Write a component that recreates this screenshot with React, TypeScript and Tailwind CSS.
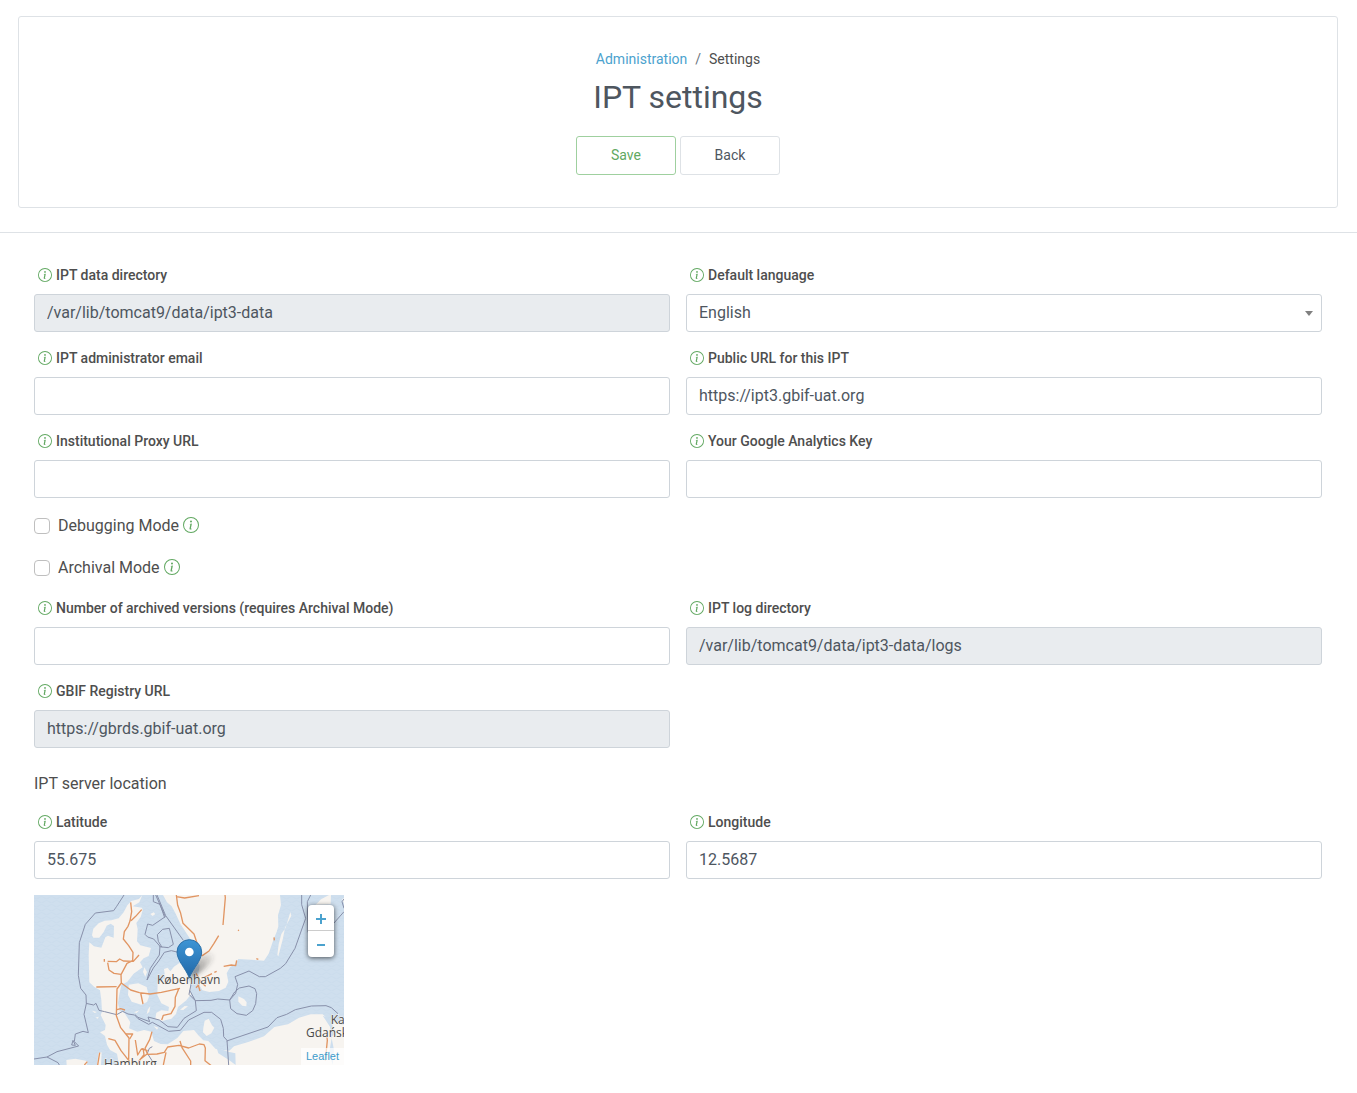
import { useId, useState } from 'react';
import type { ReactNode } from 'react';
import { BsInfoCircle } from 'react-icons/bs';

const inputBase =
  'block h-[38px] w-full rounded-[3px] border border-[#ced4da] px-3 text-base text-[#4e565f] outline-none focus:border-[#61a861]';

function InfoButton({ about, large = false }: { about: string; large?: boolean }) {
  return (
    <button type="button" aria-label={`Help: ${about}`} className="shrink-0 pb-0.5 text-[#61a861]">
      <BsInfoCircle className={large ? 'size-4' : 'size-3.5'} />
    </button>
  );
}

function FieldShell({ label, id, children }: { label: string; id: string; children: ReactNode }) {
  return (
    <div className="min-w-0">
      <div className="mb-2 flex h-[21px] items-center gap-1 pl-1">
        <InfoButton about={label} />
        <label htmlFor={id} className="text-sm leading-[21px] font-medium text-[#4e4e4e]">
          {label}
        </label>
      </div>
      {children}
    </div>
  );
}

function TextField({ label, value = '', readOnly = false }: { label: string; value?: string; readOnly?: boolean }) {
  const id = useId();
  return (
    <FieldShell label={label} id={id}>
      <input
        id={id}
        type="text"
        defaultValue={value}
        readOnly={readOnly}
        className={`${inputBase} pb-0.5 ${readOnly ? 'bg-[#e9ecef]' : 'bg-white'}`}
      />
    </FieldShell>
  );
}

function LanguageField() {
  const id = useId();
  return (
    <FieldShell label="Default language" id={id}>
      <div className="relative">
        <select id={id} defaultValue="English" className={`${inputBase} appearance-none bg-white`}>
          <option>English</option>
          <option>Français</option>
          <option>Español</option>
        </select>
        <svg viewBox="0 0 8 5" className="pointer-events-none absolute top-[17px] right-[9px] h-[5px] w-2" aria-hidden="true">
          <path d="M0 0h8L4 5z" fill="#808080" />
        </svg>
      </div>
    </FieldShell>
  );
}

function CheckField({ label }: { label: string }) {
  const id = useId();
  const [on, setOn] = useState(false);
  return (
    <div className="flex h-[26px] items-start">
      <div className="flex h-6 items-center">
        <input
          id={id}
          type="checkbox"
          checked={on}
          onChange={(e) => setOn(e.target.checked)}
          className="size-4 appearance-none rounded-[4px] border border-[#bfbfbf] bg-white checked:bg-[#61a861]"
        />
        <label htmlFor={id} className="mr-1 ml-2 text-base text-[#4e4e4e]">
          {label}
        </label>
        <InfoButton about={label} large />
      </div>
    </div>
  );
}

function MapDrawing() {
  return (
    <svg viewBox="0 0 930 510" className="block size-full" role="img" aria-label="Map centred on København">
      <defs>
        <pattern id="waves" width="30" height="24" patternUnits="userSpaceOnUse">
          <path d="M0 8q7.500 7 15 0t15 0M0 20q7.500-7 15 0t15 0" fill="none" stroke="#c8dbeb" strokeWidth="2" />
        </pattern>
        <linearGradient id="pin" x1="0" y1="0" x2="0" y2="1">
          <stop offset="0" stopColor="#3d95d5" />
          <stop offset="1" stopColor="#2268a8" />
        </linearGradient>
        <linearGradient id="shade" x1="0" y1="1" x2="1" y2="0">
          <stop offset="0" stopColor="#333" stopOpacity=".65" />
          <stop offset="1" stopColor="#333" stopOpacity="0" />
        </linearGradient>
        <filter id="soft" x="-30%" y="-30%" width="160%" height="160%">
          <feGaussianBlur stdDeviation="6" />
        </filter>
      </defs>
      <rect width="930" height="510" fill="#cfdfee" />
      <rect width="930" height="510" fill="url(#waves)" />
      <g fill="#f7f4f0">
        <path d="M325 0L315 12 292 18 280 31 269 52 254 70 232 76 212 77 194 85 178 101 174 121 178 128 196 128 209 111 218 92 230 86 240 93 239 128 222 122 214 127 202 158 180 154 166 142 164 180 166 262 181 276 198 286 202 315 204 350 200 360 215 390 213 405 198 412 213 423 219 449 228 465 249 476 255 510H930V390L906 384 880 371 866 358 830 358 795 368 762 388 721 396 690 424 640 442 600 454 586 467 545 462 523 438 508 436 493 421 480 405 448 408 430 429 401 448 380 447 360 438 352 410 330 405 310 410 285 400 289 382 271 353 257 348 252 325 255 303 262 270 280 260 299 236 326 217 318 202 329 190 344 183 351 159 319 151 309 139 311 103 307 84 320 66 326 46 324 38 296 34 316 22z" />
        <path d="M387 0L399 22 413 34 424 54 439 86 455 111 470 134 481 159 490 190 497 212 493 236 494 266 505 286 526 291 555 288 575 278 583 260 578 235 588 217 604 207 613 192 651 194 690 197 704 176 719 132 728 111 733 94 732 61 741 30 738 0z" />
        <path d="M284 269L313 265 338 276 345 305 339 321 322 329 293 320 282 300zM371 264L394 250 390 222 401 218 409 229 420 215 436 204 451 211 460 232 467 262 471 298 457 316 432 336 426 357 412 371 384 378 364 371 367 353 382 346 403 348 405 336 382 325 370 300zM331 217l8 14-5 14-7-14zM349 57l10-5 5 5-8 6zM438 344l14-11 10 1-14 11zM341 344l8-11-3 17-8 8zM300 352l16-6-8 8zM174 347l15 4-7 3zM184 368l10-3-2 6zM359 393l14 5-4 6z" />
        <path d="M769 51L772 62 753 98 747 130 733 184 730 180 734 148 742 117 755 98zM885 0H891L890 28 845 29 861 13zM924 13l6-4v16z" />
        <path d="M613 304L630 312 638 322 637 334 625 332 613 320zM512 377L524 371 534 391 541 398 532 415 518 423 507 412 508 399zM97 495L124 491 160 498 158 510H98zM193 475l10-3-2 38h-12z" />
      </g>
      <g fill="#cddeee">
        <path d="M548 458L583 470 604 475 605 510 586 496 553 475zM866 362L884 369 894 381 899 418 891 430 888 395zM893 430l7 35-4 45-10-40z" />
      </g>
      <g fill="none" stroke="#8890aa" strokeWidth="3" strokeLinejoin="round">
        <path d="M270 0L248 34 239 47 184 54 154 88 136 143 133 241 140 280 156 300 157 326 150 358 163 413 147 409 124 417 121 440 134 453 69 470 39 486 0 492M39 486L72 503 76 510M113 450l4-14 7 15z" />
        <path d="M156 325L179 330 186 325 195 346 212 350 248 359 266 349 282 357 302 360 312 371 344 388 355 382 404 409 439 406 464 375 510 352 533 352 560 373 568 400 569 425 579 436 584 510" />
        <path d="M303 359L312 367 347 380 342 366 376 375 402 395 430 397 450 370 487 347 484 317 465 298 472 264M467 286l17 31 47-1 20-4 36 3 18-20 6-27-8-23 42-17 31 17 18 0 45-25 16-14 28-46 32-90-12-41V0M587 315l15-24 14-12 29-6 18 8 5 15-3 30-9 21-19 14-28-5-19-15zM578 438L702 396 729 368 758 358 784 344 832 333 876 332 892 338 912 356" />
        <path d="M365 0L394 65 356 91 341 87 333 118 341 126 359 132 378 154 376 180 349 220 339 255 358 219 374 198 391 172 412 167 433 172M376 155L403 158 418 148 406 100 386 103 370 119 373 139 384 157M369 0L395 62 448 136M358 0L358 20 378 28 392 68M830 0L820 20 822 112M930 50L900 84M930 12l-6 8 6 20" />
        <path d="M340 475l6-15 9-5M340 475l18 28" />
      </g>
      <g fill="none" stroke="#e19562" strokeWidth="4" strokeLinejoin="round">
        <path d="M290 22L293 50 288 78 282 94 271 110 268 132 284 152 297 172 296 197 279 205 261 239 262 264 290 285 316 293 348 297 382 292 438 280M248 275l-61 1M262 264l-13 18-2 80 13 36 25 31-1 65M323 44l-18 20-14 13M211 192v8M221 203l4 22 15 10 21 3M221 199l26 1 10-8 11 6 30 1 17-19M320 294l7 33M249 344l11-3 13 4M435 280l-11 27-1 27-12 22-23 5-5 14" />
        <path d="M276 417l20 0-9 15M223 431l20 5 18 31 26 33M354 410l-7 24-14 26 8 18 28-1 22-5 10-16 34-5 29 8 32-12 14 2 4 10-1 38 25 20M304 435l7 45 11-18 19 5M396 472l-8 38M438 438l6 20 26 40v12M342 475l-23 18-11 17M327 459l3 20-17 21M160 500l-9 10M197 473l-6 37M877 410l3 26-6 60" />
        <path d="M427 0L431 31 440 55 447 85 480 117 488 141 489 178 505 182 525 168 540 145 554 122M427 5l25 4 43-7M573 0l1 8-7 82M486 235l14 25 15 14M492 268l6 20M510 248l24-12M541 232l7-3M569 214l23-4 13 2 3-16M720 127l1 9M667 191l6 2M612 105l3 2M486 278l10-10" />
      </g>
      <g fill="#4a4a4a" stroke="#f7f4f0" strokeWidth="3" paintOrder="stroke" fontFamily="Open Sans, sans-serif" fontSize="36">
        <text x="369" y="268">København</text>
        <text x="816" y="427">Gdańsk</text>
        <text x="890" y="386">Kaliningrad</text>
        <text x="210" y="520">Hamburg</text>
      </g>
      <path d="M467 248Q486 180 525 173Q557 176 520 214Q496 238 467 248Z" fill="url(#shade)" filter="url(#soft)" />
      <path d="M466 248C454 219 429 196 429 171A37 37 0 0 1 503 171C503 196 478 219 466 248Z" fill="url(#pin)" stroke="#2b70a9" strokeWidth="3" />
      <circle cx="466" cy="171" r="13" fill="#fff" />
    </svg>
  );
}

function LocationMap() {
  return (
    <div className="relative h-[170px] w-[310px] overflow-hidden bg-[#cddeee]">
      <MapDrawing />
      <div className="absolute top-2.5 right-2.5 w-[26px] overflow-hidden rounded-[4px] bg-white text-[#4ba2ce] shadow-[0_1px_5px_rgba(0,0,0,0.65)]">
        <button type="button" aria-label="Zoom in" className="flex h-[26px] w-full items-center justify-center border-b border-[#ccc] pt-0.5">
          <svg viewBox="0 0 10 10" className="size-2.5">
            <path d="M5 0v10M0 5h10" stroke="currentColor" strokeWidth="2" />
          </svg>
        </button>
        <button type="button" aria-label="Zoom out" className="flex h-[26px] w-full items-center justify-center pt-0.5">
          <svg viewBox="0 0 10 10" className="size-2.5">
            <path d="M1 5h8" stroke="currentColor" strokeWidth="2" />
          </svg>
        </button>
      </div>
      <div className="absolute right-0 bottom-0 bg-white/70 px-[5px] pb-px font-['Liberation_Sans',sans-serif] text-[11px] leading-4">
        <a href="#leaflet" className="text-[#3c9bcb]">
          Leaflet
        </a>
      </div>
    </div>
  );
}

export default function App() {
  return (
    <div className="min-h-screen bg-white pt-4 pb-7 font-[Roboto,sans-serif] text-[#4e4e4e]">
      <header className="border-b border-[#dee2e6] pr-px pb-6">
        <div className="mx-auto flex max-w-[1320px] flex-col items-center rounded-[3px] border border-[#dee2e6] py-8">
          <nav aria-label="Breadcrumb" className="flex gap-2 text-sm leading-[21px]">
            <a href="#administration" className="text-[#4ba2ce]">
              Administration
            </a>
            <span className="text-[#6c757d]">/</span>
            <span>Settings</span>
          </nav>
          <h1 className="mt-2 text-[32px] leading-[38px] text-[#4e565f]">IPT settings</h1>
          <div className="mt-5 flex gap-1 text-sm">
            <button type="submit" form="settings" className="h-[39px] w-[100px] rounded-[3px] border border-[#9fd09f] pb-0.5 text-[#61a861]">
              Save
            </button>
            <button type="button" className="h-[39px] w-[100px] rounded-[3px] border border-[#dee2e6] pb-0.5 text-[#4e565f]">
              Back
            </button>
          </div>
        </div>
      </header>

      <main className="pr-px">
        <form id="settings" className="mx-auto max-w-[1320px] px-4 pt-8" onSubmit={(e) => e.preventDefault()}>
          <div className="grid grid-cols-2 gap-4">
            <TextField label="IPT data directory" value="/var/lib/tomcat9/data/ipt3-data" readOnly />
            <LanguageField />
            <TextField label="IPT administrator email" />
            <TextField label="Public URL for this IPT" value="https://ipt3.gbif-uat.org" />
            <TextField label="Institutional Proxy URL" />
            <TextField label="Your Google Analytics Key" />
            <div className="col-span-2">
              <CheckField label="Debugging Mode" />
            </div>
            <div className="col-span-2">
              <CheckField label="Archival Mode" />
            </div>
            <TextField label="Number of archived versions (requires Archival Mode)" />
            <TextField label="IPT log directory" value="/var/lib/tomcat9/data/ipt3-data/logs" readOnly />
            <TextField label="GBIF Registry URL" value="https://gbrds.gbif-uat.org" readOnly />
          </div>

          <h2 className="mt-6 mb-4 text-base">IPT server location</h2>
          <div className="grid grid-cols-2 gap-4">
            <TextField label="Latitude" value="55.675" />
            <TextField label="Longitude" value="12.5687" />
            <div className="col-span-2">
              <LocationMap />
            </div>
          </div>
        </form>
      </main>
    </div>
  );
}
